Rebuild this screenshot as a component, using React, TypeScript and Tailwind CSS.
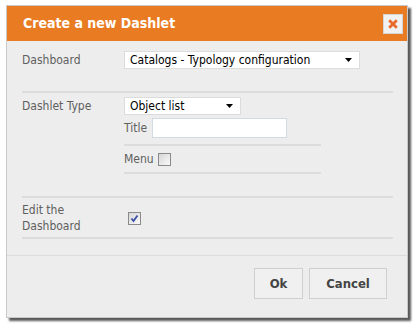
import React from 'react';

function Arrow() {
  return (
    <svg width="7" height="4" viewBox="0 0 7 4" className="shrink-0">
      <polygon points="0,0 7,0 3.5,4" fill="#000" />
    </svg>
  );
}

function FakeSelect({ value, width }: { value: string; width: string }) {
  return (
    <div className={`${width} h-[18px] bg-white border border-[#dcdcdc] flex items-center justify-between pl-[5px] pr-[7px] text-[12px] text-black`}>
      <span className="leading-none">{value}</span>
      <Arrow />
    </div>
  );
}

function Box({ checked }: { checked?: boolean }) {
  return (
    <span className="w-[13px] h-[13px] border border-[#8a8a8a] bg-linear-to-br from-[#d6d6d6] to-[#fafafa] flex items-center justify-center">
      {checked && (
        <svg width="9" height="9" viewBox="0 0 9 9">
          <path d="M1.5 4.5 L3.5 7 L7.5 1.5" stroke="#3b4fa8" strokeWidth="1.8" fill="none" />
        </svg>
      )}
    </span>
  );
}

export default function App() {
  return (
    <div className="w-[418px] h-[325px] bg-white pt-[5px] pl-[6px] font-['DejaVu_Sans_Condensed','Liberation_Sans',sans-serif]">
      <div className="w-[402px] h-[313px] border border-[#c9c9c9] bg-[#ededed] shadow-[3px_3px_2px_rgba(0,0,0,0.65)] flex flex-col">
        <div className="h-[35px] bg-[#e97b22] flex items-center justify-between pl-[16px] pr-[4px]">
          <h2 className="text-white font-bold text-[14px]">Create a new Dashlet</h2>
          <button className="w-[20px] h-[20px] bg-[#f1f1f1] border border-[#d6d6d6] flex items-center justify-center">
            <svg width="10" height="10" viewBox="0 0 10 10">
              <path d="M2.2 2.2 L7.8 7.8 M7.8 2.2 L2.2 7.8" stroke="#ea6a2c" strokeWidth="2.8" strokeLinecap="square" />
            </svg>
          </button>
        </div>

        <div className="pl-[15px] pr-[14px] pt-[10px] text-[12px] text-[#606060]">
          <div className="flex h-[42px] border-b-2 border-[#dcdcdc]">
            <label className="w-[102px] leading-[18px]">Dashboard</label>
            <FakeSelect value="Catalogs - Typology configuration" width="w-[236px]" />
          </div>

          <div className="flex pt-[4px] pb-[22px] border-b-2 border-[#dcdcdc]">
            <label className="w-[102px] leading-[18px]">Dashlet Type</label>
            <div className="flex flex-col w-[197px]">
              <FakeSelect value="Object list" width="w-[117px]" />
              <div className="flex items-center gap-[5px] mt-[3px] pb-[6px] border-b-2 border-[#dcdcdc]">
                <span>Title</span>
                <input type="text" className="w-[135px] h-[20px] bg-white border border-[#d3dae2] outline-none" />
              </div>
              <div className="flex items-center gap-[4px] h-[28px] border-b-2 border-[#dcdcdc]">
                <span>Menu</span>
                <Box />
              </div>
            </div>
          </div>

          <div className="flex items-center pt-[4px] pb-[3px] border-b-2 border-[#dcdcdc]">
            <label className="w-[106px] leading-[16px]">
              Edit the
              <br />
              Dashboard
            </label>
            <Box checked />
          </div>
        </div>

        <div className="mt-[16px] border-t border-[#dcdcdc] flex justify-end gap-[6px] pt-[12px] pr-[20px]">
          <button className="w-[49px] h-[31px] border border-[#cfcfcf] bg-[#f0f0f0] text-[#444] font-bold text-[13px]">Ok</button>
          <button className="w-[78px] h-[31px] border border-[#cfcfcf] bg-[#f0f0f0] text-[#444] font-bold text-[13px]">Cancel</button>
        </div>
      </div>
    </div>
  );
}
